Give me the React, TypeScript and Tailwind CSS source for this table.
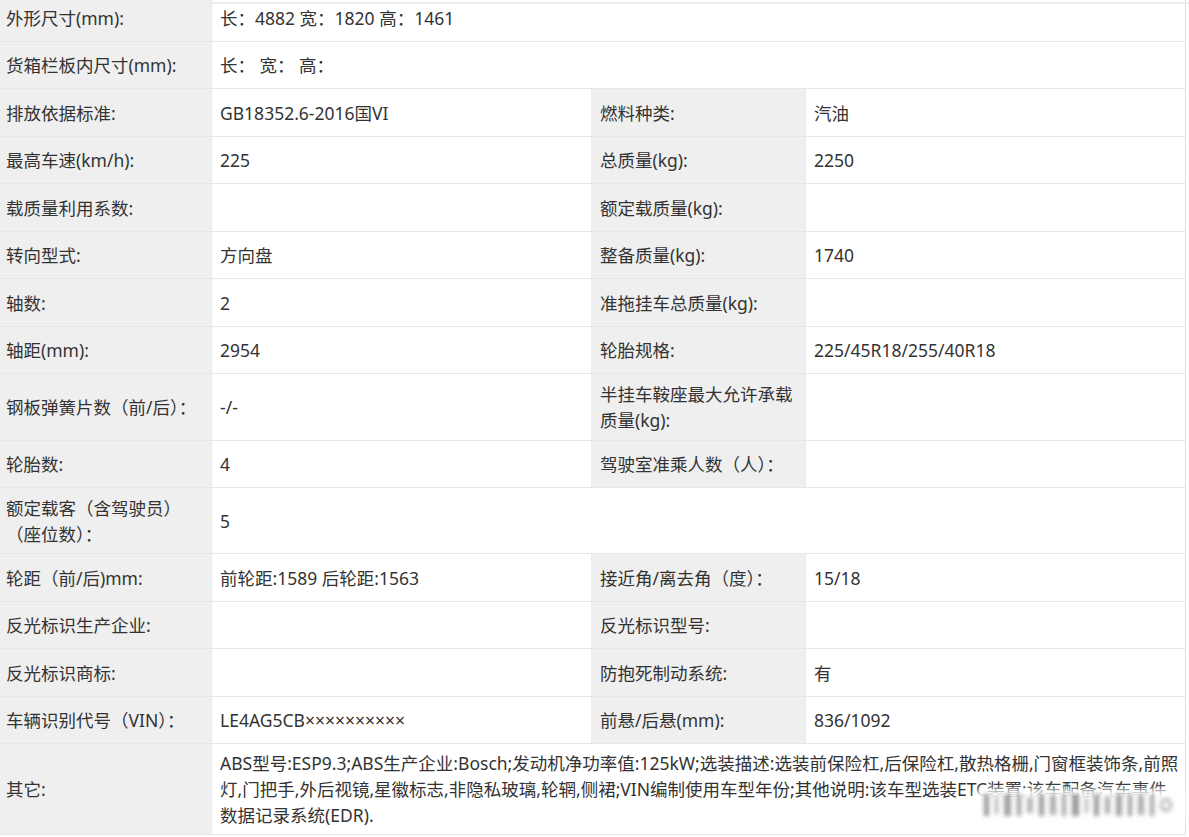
import React from "react";

type Row = {
  h: string;
  l1: React.ReactNode;
  v1?: React.ReactNode;
  l2?: React.ReactNode;
  v2?: React.ReactNode;
  span?: boolean;
};

const rows: Row[] = [
  { h: "h-[47px]", l1: "外形尺寸(mm):", v1: "长：4882 宽：1820 高：1461", span: true },
  { h: "h-[47px]", l1: "货箱栏板内尺寸(mm):", v1: "长： 宽： 高：", span: true },
  { h: "h-[48px]", l1: "排放依据标准:", v1: "GB18352.6-2016国VI", l2: "燃料种类:", v2: "汽油" },
  { h: "h-[47px]", l1: "最高车速(km/h):", v1: "225", l2: "总质量(kg):", v2: "2250" },
  { h: "h-[48px]", l1: "载质量利用系数:", v1: "", l2: "额定载质量(kg):", v2: "" },
  { h: "h-[47px]", l1: "转向型式:", v1: "方向盘", l2: "整备质量(kg):", v2: "1740" },
  { h: "h-[48px]", l1: "轴数:", v1: "2", l2: "准拖挂车总质量(kg):", v2: "" },
  { h: "h-[47px]", l1: "轴距(mm):", v1: "2954", l2: "轮胎规格:", v2: "225/45R18/255/40R18" },
  {
    h: "h-[67px]",
    l1: "钢板弹簧片数（前/后）：",
    v1: "-/-",
    l2: (
      <>
        半挂车鞍座最大允许承载
        <br />
        质量(kg):
      </>
    ),
    v2: "",
  },
  { h: "h-[47px]", l1: "轮胎数:", v1: "4", l2: "驾驶室准乘人数（人）：", v2: "" },
  {
    h: "h-[66px]",
    l1: (
      <>
        额定载客（含驾驶员）
        <br />
        （座位数）：
      </>
    ),
    v1: "5",
    span: true,
  },
  { h: "h-[48px]", l1: "轮距（前/后)mm:", v1: "前轮距:1589 后轮距:1563", l2: "接近角/离去角（度）：", v2: "15/18" },
  { h: "h-[47px]", l1: "反光标识生产企业:", v1: "", l2: "反光标识型号:", v2: "" },
  { h: "h-[48px]", l1: "反光标识商标:", v1: "", l2: "防抱死制动系统:", v2: "有" },
  { h: "h-[47px]", l1: "车辆识别代号（VIN）：", v1: "LE4AG5CB××××××××××", l2: "前悬/后悬(mm):", v2: "836/1092" },
  {
    h: "h-[91px]",
    l1: "其它:",
    v1: (
      <>
        ABS型号:ESP9.3;ABS生产企业:Bosch;发动机净功率值:125kW;选装描述:选装前保险杠,后保险杠,散热格栅,门窗框装饰条,前照
        <br />
        灯,门把手,外后视镜,星徽标志,非隐私玻璃,轮辋,侧裙;VIN编制使用车型年份;其他说明:该车型选装ETC装置;该车配备汽车事件
        <br />
        数据记录系统(EDR).
      </>
    ),
    span: true,
  },
];

const labelCls =
  "flex items-center bg-[#efefef] text-[#333] border-b border-[#e6e6e6] border-r border-r-[#e9e9e9] whitespace-nowrap";
const valueCls =
  "flex items-center bg-white text-[#333] border-b border-[#e6e6e6] whitespace-nowrap";

const bars = [
  "w-[5px] h-[22px] bg-[#444]",
  "w-[3px] h-[18px] bg-[#666]",
  "w-[7px] h-[22px] bg-[#555]",
  "w-[4px] h-[22px] bg-[#444]",
  "w-[6px] h-[16px] bg-[#777]",
  "w-[5px] h-[22px] bg-[#444]",
  "w-[6px] h-[20px] bg-[#666]",
  "w-[4px] h-[22px] bg-[#555]",
  "w-[7px] h-[22px] bg-[#444]",
  "w-[3px] h-[16px] bg-[#777]",
  "w-[5px] h-[22px] bg-[#444]",
  "w-[5px] h-[18px] bg-[#666]",
  "w-[6px] h-[22px] bg-[#555]",
  "w-[4px] h-[22px] bg-[#444]",
  "w-[6px] h-[20px] bg-[#666]",
  "w-[4px] h-[22px] bg-[#555]",
];

export default function App() {
  return (
    <div
      className="relative w-[1189px] h-[837px] overflow-hidden bg-white text-[17.5px] leading-[26px]"
      style={{ fontFamily: '"Noto Sans", "Noto Sans CJK SC", sans-serif' }}
    >
      <div className="absolute left-0 top-[2px] h-[2px] w-[1189px] bg-[#ececec]" />
      <div className="-mt-[5px] w-[1186px] border-r border-[#dcdcdc]">
        {rows.map((r, i) => (
          <div
            key={i}
            className={`grid grid-cols-[212px_380px_214px_379px] ${r.h}`}
          >
            <div className={`${labelCls} pl-[6px] pr-2`}>
              <div>{r.l1}</div>
            </div>
            {r.span ? (
              <div className={`${valueCls} col-span-3 px-2`}>
                <div>{r.v1}</div>
              </div>
            ) : (
              <>
                <div className={`${valueCls} px-2 border-r border-r-[#ececec]`}>
                  <div>{r.v1}</div>
                </div>
                <div className={`${labelCls} px-2`}>
                  <div>{r.l2}</div>
                </div>
                <div className={`${valueCls} px-2`}>
                  <div>{r.v2}</div>
                </div>
              </>
            )}
          </div>
        ))}
      </div>
      {/* blurred watermark */}
      <div className="absolute left-[974px] top-[789px] w-[212px] h-[32px] bg-white/90 blur-[3px] rounded-md" />
      <div className="absolute left-[984px] top-[793px] flex items-center gap-[6px] h-[24px] blur-[2px] opacity-55">
        {bars.map((b, i) => (
          <div key={i} className={b} />
        ))}
        <div className="w-[12px] h-[14px] rounded-full border-[3px] border-[#777]" />
      </div>
    </div>
  );
}
